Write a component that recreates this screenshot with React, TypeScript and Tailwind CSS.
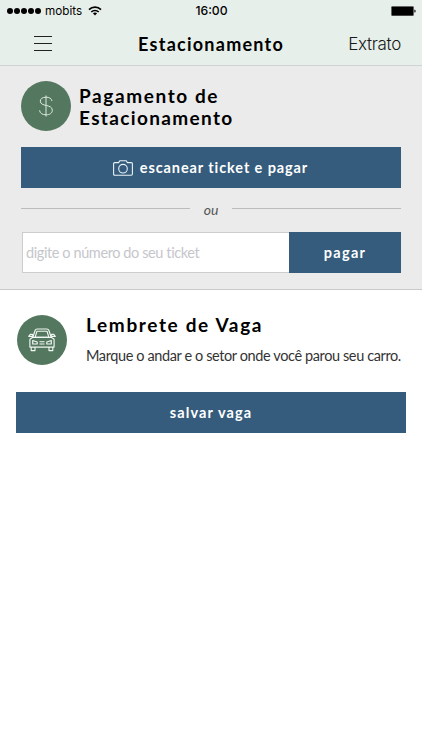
import type { ReactNode } from "react";

const heading = "font-['Lato',sans-serif] font-bold text-black whitespace-nowrap";
const buttonText = "font-['Lato',sans-serif] font-bold text-white whitespace-nowrap";

function Badge({ children }: { children: ReactNode }) {
  return (
    <div className="flex size-[50px] shrink-0 items-center justify-center rounded-full bg-[#54775f]">
      {children}
    </div>
  );
}

function StatusBar() {
  return (
    <div className="grid h-[22px] grid-cols-[1fr_auto_1fr] items-center pl-[7px] pr-[6px] font-['Inter',sans-serif] text-black">
      <div className="flex items-center">
        <div className="flex gap-[1px]">
          {[0, 1, 2, 3, 4].map((i) => (
            <span key={i} className="size-[6px] rounded-full bg-black" />
          ))}
        </div>
        <span className="ml-[4px] text-[11.7px] leading-[22px]">mobits</span>
        <svg className="ml-[6px]" width="14" height="10" viewBox="0 0 14 10" fill="none" stroke="black" strokeWidth="1.7">
          <path d="M1 3.6C4.3 0.3 9.7 0.3 13 3.6" />
          <path d="M3.3 6C5.3 4 8.7 4 10.7 6" />
          <path d="M7 9.4L4.9 7.3C6.1 6.3 7.9 6.3 9.1 7.3Z" fill="black" stroke="none" />
        </svg>
      </div>
      <span className="text-[12.2px] font-medium leading-[22px]">16:00</span>
      <svg className="justify-self-end" width="25" height="10" viewBox="0 0 25 10">
        <rect x="0.5" y="0.4" width="22" height="9.3" rx="0.8" fill="black" stroke="#555" strokeWidth="0.5" />
        <path d="M23.4 3.4C25 3.6 25 6.4 23.4 6.6Z" fill="black" />
      </svg>
    </div>
  );
}

function CameraIcon() {
  return (
    <svg width="20" height="16" viewBox="0 0 20 16" fill="none" stroke="#e9f2f7" strokeWidth="1.1" strokeLinejoin="round">
      <path d="M1.8 2.6H5.6L6.8 0.7H13.2L14.4 2.6H18.2Q19.4 2.6 19.4 3.8V14.1Q19.4 15.3 18.2 15.3H1.8Q0.6 15.3 0.6 14.1V3.8Q0.6 2.6 1.8 2.6Z" />
      <circle cx="10" cy="8.7" r="4.3" />
    </svg>
  );
}

function CarIcon() {
  return (
    <svg width="28" height="24" viewBox="0 0 28 24" fill="none" stroke="#f1f7f2" strokeWidth="1.15" strokeLinejoin="round">
      <path d="M4.8 9.3L7.2 2.3Q7.7 1 9.1 1H18.9Q20.3 1 20.8 2.3L23.2 9.3" />
      <path d="M7.2 9.2L9 3.2H19L20.8 9.2Z" />
      <path d="M5.1 8.6L4.5 6.3H2.3L0.7 8.4H4.7M22.9 8.6L23.5 6.3H25.7L27.3 8.4H23.3" />
      <path d="M4.8 9.3H23.2L26.1 11.2V19.1H1.9V11.2Z" />
      <path d="M3.2 19.1V22.6H7V19.1M21 19.1V22.6H24.8V19.1" />
      <path d="M4.7 12.5L9.2 14V16H4.7ZM23.3 12.5L18.8 14V16H23.3Z" />
      <path d="M11.5 13.7H16.5M11.5 16H16.5" />
    </svg>
  );
}

export default function App() {
  return (
    <div className="h-[750px] w-[422px] overflow-hidden bg-white">
      <header className="h-[66px] border-b border-[#cfd3d1] bg-[#e7efea]">
        <StatusBar />
        <div className="flex h-[43px] items-center justify-between pl-[34px] pr-[21px]">
          <button aria-label="Menu" className="flex w-[18px] flex-col gap-[6px]">
            <span className="h-px bg-[#222]" />
            <span className="h-px bg-[#222]" />
            <span className="h-px bg-[#222]" />
          </button>
          <h1 className={`${heading} ml-[22px] text-[18px] leading-[22px] tracking-[1.25px]`}>Estacionamento</h1>
          <span className="font-['Inter',sans-serif] text-[17px] font-light leading-[22px] tracking-[-0.3px] text-[#161a18]">Extrato</span>
        </div>
      </header>

      <section className="h-[224px] border-b border-[#c9c9c9] bg-[#ebebeb] px-[21px] pt-[15px]">
        <div className="flex h-[66px] gap-[8px]">
          <Badge>
            <svg width="14" height="22" viewBox="0 0 14 22" fill="none" stroke="#dcebdf" strokeWidth="1">
              <path d="M13 6C12.5 3.4 10.4 2.2 7 2.2C3.4 2.2 1.3 3.7 1.3 6.2C1.3 12 13.3 8.8 13.3 15.2C13.3 18.2 10.8 19.8 7.1 19.8C3.2 19.8 0.8 18.2 0.6 15.3M7 0.5V21.5" />
            </svg>
          </Badge>
          <h2 className={`${heading} pt-[4px] text-[19px] leading-[22px] tracking-[1.35px]`}>
            <span className="tracking-[1.6px]">Pagamento de</span>
            <br />
            Estacionamento
          </h2>
        </div>
        <button className="flex h-[41px] w-[380px] items-center justify-center gap-[7px] bg-[#355c7c] pr-px">
          <CameraIcon />
          <span className={`${buttonText} text-[14.5px] leading-[20px] tracking-[0.9px]`}>escanear ticket e pagar</span>
        </button>
        <div className="flex h-[44px] items-center justify-between">
          <span className="mb-[4px] h-px w-[169px] bg-[#bcbcbc]" />
          <span className="font-['Lato',sans-serif] text-[14px] italic leading-[20px] text-[#555]">ou</span>
          <span className="mb-[4px] h-px w-[169px] bg-[#bcbcbc]" />
        </div>
        <div className="flex h-[41px] w-[380px] pl-px">
          <input
            placeholder="digite o número do seu ticket"
            className="w-[267px] border border-r-0 border-[#cdcdcd] bg-white pl-[3px] font-['Lato',sans-serif] text-[14.5px] tracking-[-0.4px] outline-none placeholder:text-[#c5c6cb]"
          />
          <button className={`${buttonText} w-[112px] bg-[#355c7c] text-[14.5px] tracking-[1.3px]`}>pagar</button>
        </div>
      </section>

      <section className="pt-[25px]">
        <div className="flex h-[77px] gap-[19px] pl-[17px]">
          <Badge>
            <CarIcon />
          </Badge>
          <div>
            <h2 className={`${heading} -mt-px text-[19px] leading-[22px] tracking-[1.65px]`}>Lembrete de Vaga</h2>
            <p className="mt-[9px] whitespace-nowrap font-['Lato',sans-serif] text-[14.5px] leading-[22px] tracking-[-0.39px] text-[#333]">
              Marque o andar e o setor onde você parou seu carro.
            </p>
          </div>
        </div>
        <button className={`${buttonText} ml-[16px] h-[41px] w-[390px] bg-[#355c7c] text-[14.5px] tracking-[1.1px]`}>salvar vaga</button>
      </section>
    </div>
  );
}
